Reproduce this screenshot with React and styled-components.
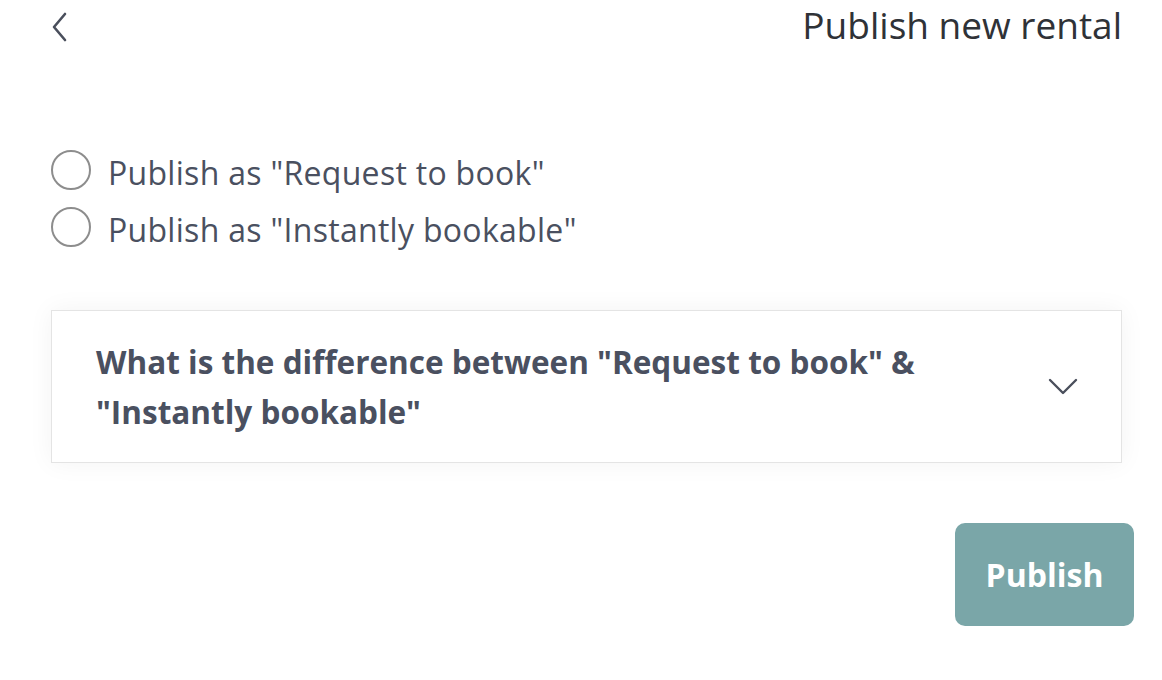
import React, { useState } from "react";
import styled, { createGlobalStyle } from "styled-components";

const GlobalStyle = createGlobalStyle`
  html, body {
    margin: 0;
    padding: 0;
    background: #ffffff;
  }
  body {
    font-family: "Open Sans", "Noto Sans", sans-serif;
    color: #4a5060;
  }
`;

const Page = styled.div`
  width: 1162px;
  height: 680px;
  box-sizing: border-box;
  display: flex;
  flex-direction: column;
`;

const Header = styled.header`
  display: flex;
  align-items: center;
  justify-content: space-between;
  padding: 0 40px 0 46px;
  height: 54px;
`;

const BackButton = styled.button`
  border: none;
  background: none;
  padding: 0;
  width: 26px;
  height: 34px;
  display: flex;
  align-items: center;
  justify-content: center;
  cursor: pointer;
  color: #4a4f5c;
`;

const Title = styled.h1`
  margin: -6px 0 0;
  font-size: 37px;
  font-weight: 400;
  color: #2f3237;
`;

const Content = styled.main`
  padding: 96px 40px 0 51px;
  display: flex;
  flex-direction: column;
`;

const Options = styled.div`
  display: flex;
  flex-direction: column;
  gap: 17px;
`;

const Option = styled.label`
  display: flex;
  align-items: center;
  gap: 17px;
  height: 40px;
  font-size: 32px;
  letter-spacing: 0.3px;
  color: #4a5060;
  cursor: pointer;
`;

const OptionText = styled.span`
  line-height: 40px;
  padding-top: 5px;
`;

const Radio = styled.span`
  width: 40px;
  height: 40px;
  border-radius: 50%;
  border: 2px solid #8d8d8d;
  box-sizing: border-box;
  flex-shrink: 0;
  display: flex;
  align-items: center;
  justify-content: center;
  &::after {
    content: "";
    width: 20px;
    height: 20px;
    border-radius: 50%;
    background: ${(p) => (p.$checked ? "#7aa6a8" : "transparent")};
  }
`;

const Card = styled.section`
  margin-top: 63px;
  border: 1px solid #e4e4e4;
  box-shadow: 0 0 24px rgba(0, 0, 0, 0.05);
  background: #fff;
  display: flex;
  align-items: center;
  justify-content: space-between;
  padding: 24px 43px 24px 44px;
  height: 153px;
  box-sizing: border-box;
`;

const Question = styled.h2`
  margin: 0;
  font-size: 31.5px;
  font-weight: 700;
  line-height: 50px;
  color: #4a5060;
  max-width: 900px;
`;

const Footer = styled.div`
  display: flex;
  justify-content: flex-end;
  padding: 60px 28px 0 0;
`;

const PublishButton = styled.button`
  width: 179px;
  height: 103px;
  border: none;
  border-radius: 10px;
  background: #7aa6a8;
  color: #ffffff;
  font-family: "Open Sans", "Noto Sans", sans-serif;
  font-size: 32px;
  font-weight: 700;
  cursor: pointer;
`;

export default function App() {
  const [choice, setChoice] = useState(null);
  const options = [
    { id: "request", label: 'Publish as "Request to book"' },
    { id: "instant", label: 'Publish as "Instantly bookable"' },
  ];

  return (
    <>
      <GlobalStyle />
      <Page>
        <Header>
          <BackButton aria-label="Back">
            <svg width="18" height="30" viewBox="0 0 18 30" fill="none">
              <path
                d="M15 2 L4 15 L15 28"
                stroke="currentColor"
                strokeWidth="2.6"
                strokeLinecap="round"
                strokeLinejoin="round"
              />
            </svg>
          </BackButton>
          <Title>Publish new rental</Title>
        </Header>
        <Content>
          <Options>
            {options.map((o) => (
              <Option key={o.id} onClick={() => setChoice(o.id)}>
                <Radio $checked={choice === o.id} />
                <OptionText>{o.label}</OptionText>
              </Option>
            ))}
          </Options>
          <Card>
            <Question>
              What is the difference between "Request to book" &amp;
              "Instantly bookable"
            </Question>
            <svg width="30" height="17" viewBox="0 0 30 17" fill="none">
              <path
                d="M2 2 L15 15 L28 2"
                stroke="#4a4f5c"
                strokeWidth="2.4"
                strokeLinecap="round"
                strokeLinejoin="round"
              />
            </svg>
          </Card>
        </Content>
        <Footer>
          <PublishButton>Publish</PublishButton>
        </Footer>
      </Page>
    </>
  );
}
